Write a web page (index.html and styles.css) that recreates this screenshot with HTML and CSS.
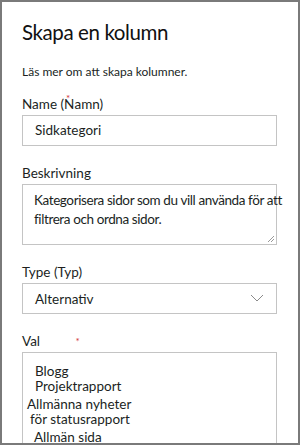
FILE: index.html
```html
<!DOCTYPE html>
<html lang="sv">
<head>
    <meta charset="UTF-8">
    <meta name="viewport" content="width=device-width, initial-scale=1.0">
    <title>Skapa en kolumn</title>
    <link rel="stylesheet" href="styles.css">
</head>
<body>
    <div class="panel">
        <h1 class="title">Skapa en kolumn</h1>
        <p class="learn">Läs mer om att skapa kolumner.</p>

        <div class="field">
            <label class="label">Name (<span class="req-n">N<span class="req-mark">*</span></span>amn)</label>
            <div class="input">Sidkategori</div>
        </div>

        <div class="field">
            <label class="label">Beskrivning</label>
            <div class="textarea">
                <span class="desc">Kategorisera sidor som du vill använda för att</span>
                <span class="desc">filtrera och ordna sidor.</span>
                <svg class="grip" width="9" height="9" viewBox="0 0 9 9">
                    <path d="M8 2 L2 8 M8 5 L5 8" stroke="#9a9a9a" stroke-width="1" fill="none"/>
                </svg>
            </div>
        </div>

        <div class="field">
            <label class="label">Type (Typ)</label>
            <div class="select">
                <span>Alternativ</span>
                <svg class="chevron" width="14" height="8" viewBox="0 0 14 8">
                    <path d="M1 1 L7 7 L13 1" stroke="#8a8a8a" stroke-width="1" fill="none"/>
                </svg>
            </div>
        </div>

        <div class="field">
            <label class="label">Val <span class="star">*</span></label>
            <div class="choices">
                <div class="choice c1">Blogg</div>
                <div class="choice c1">Projektrapport</div>
                <div class="choice c2">Allmänna nyheter</div>
                <div class="choice c3">för statusrapport</div>
                <div class="choice c4">Allmän sida</div>
            </div>
        </div>
    </div>
</body>
</html>
```

FILE: styles.css
```css
* {
    margin: 0;
    padding: 0;
    box-sizing: border-box;
}

body {
    font-family: 'Lato', 'Noto Sans', sans-serif;
    background: #fff;
    color: #201f1e;
}

.panel {
    height: 445px;
    border: 2px solid #7a7a7a;
    padding: 16px 21px 0 20px;
    overflow: hidden;
}

.title {
    font-size: 20.5px;
    font-weight: 400;
    letter-spacing: -0.4px;
    line-height: 28px;
    color: #111;
    margin-bottom: 18px;
}

.learn {
    font-size: 12px;
    line-height: 16px;
    margin-bottom: 15px;
}

.field {
    margin-bottom: 18px;
}

.label {
    display: block;
    font-size: 13.5px;
    line-height: 18px;
    margin-bottom: 2px;
}

.req-n {
    position: relative;
}

.req-mark {
    position: absolute;
    left: 2px;
    top: -7px;
    color: #d13438;
    font-size: 10px;
}

.star {
    color: #d13438;
    font-size: 10px;
    vertical-align: top;
    margin-left: 32px;
}

.input,
.select,
.textarea,
.choices {
    border: 1px solid #c4c4c4;
    font-size: 13.5px;
}

.input {
    height: 31px;
    line-height: 29px;
    padding-left: 12px;
}

.textarea {
    position: relative;
    height: 61px;
    padding: 6px 0 0 11px;
    line-height: 19px;
    white-space: nowrap;
}

.desc {
    display: block;
    letter-spacing: -0.4px;
}

.grip {
    position: absolute;
    right: 1px;
    bottom: 1px;
}

.select {
    height: 31px;
    display: flex;
    align-items: center;
    justify-content: space-between;
    padding: 0 12px 0 12px;
}

.chevron {
    margin-top: -2px;
}

.choices {
    height: 100px;
    padding-top: 11px;
    line-height: 15px;
}

.choice.c1 {
    padding-left: 12px;
}

.choice.c2 {
    padding-left: 4px;
    margin-top: 3px;
}

.choice.c3 {
    padding-left: 7px;
}

.choice.c4 {
    padding-left: 11px;
    margin-top: 3px;
}
```
